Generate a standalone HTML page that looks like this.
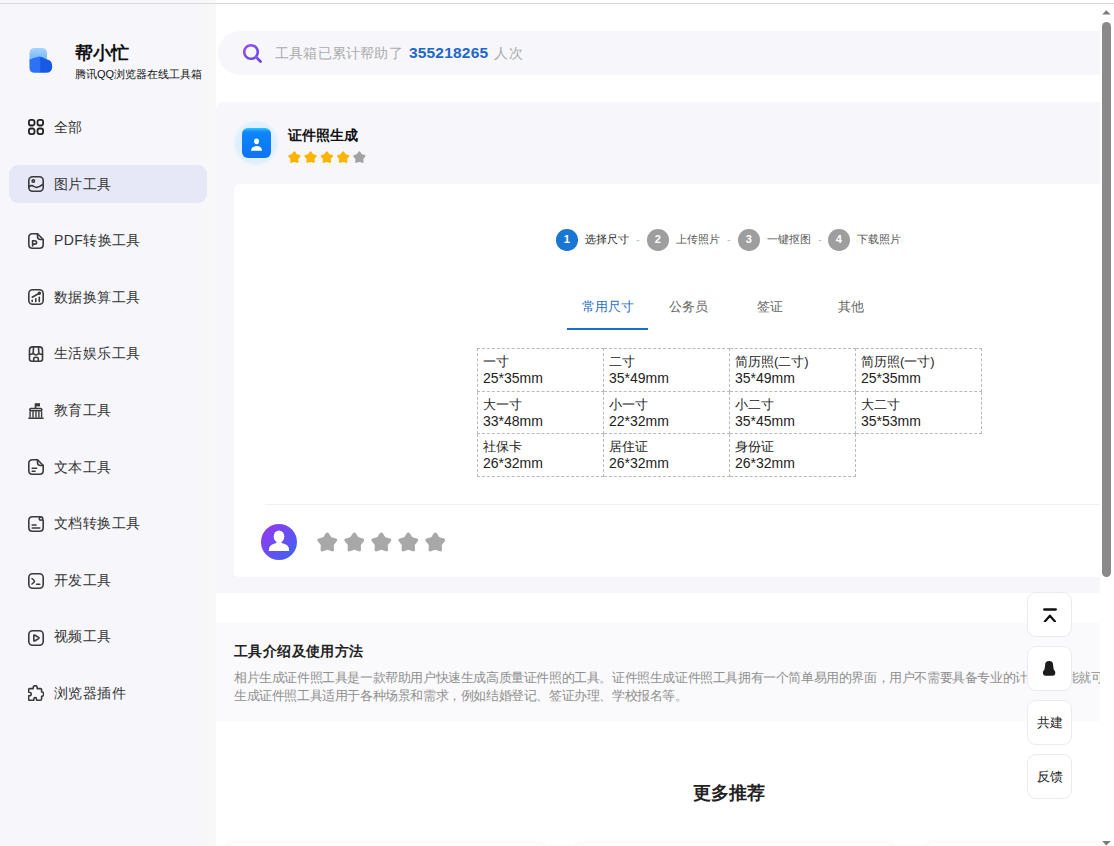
<!DOCTYPE html>
<html><head><meta charset="utf-8">
<style>
*{box-sizing:border-box;margin:0;padding:0}
html,body{width:1114px;height:846px;overflow:hidden;background:#fff;font-family:"Liberation Sans",sans-serif;color:#222}
.abs{position:absolute}
#topline{position:absolute;left:0;top:3px;width:1114px;height:1px;background:#d9d9d9}
#side{position:absolute;left:0;top:0;width:216px;height:846px;background:linear-gradient(90deg,#f7f7fb 0,#f7f7fb 200px,#f8f8f8 216px)}
.brand{position:absolute;left:75px;top:42px;font-size:18px;font-weight:bold;color:#111;line-height:22px}
.sub{position:absolute;left:75px;top:68px;font-size:11px;color:#111;line-height:13px}
.menu{position:absolute;left:9px;width:198px;height:38px;border-radius:9px}
.menu.active{background:#e6e7f7}
.menu svg{position:absolute;left:19px;top:11px;width:16px;height:16px}
.menu .tx{position:absolute;left:45px;top:0;line-height:38px;font-size:14px;letter-spacing:0.4px;color:#333}
#clip{position:absolute;left:216px;top:4px;width:884px;height:842px;overflow:hidden;background:#fff}
#search{position:absolute;left:2px;top:27px;width:1000px;height:44px;border-radius:22px;background:#f7f7fb}
#search .t{position:absolute;left:57px;top:0;line-height:44px;font-size:14px;letter-spacing:0.2px;color:#aaa}
#search .t b{color:#2166cc;font-size:15.5px;margin:0 2px}
#panel{position:absolute;left:0;top:98px;width:1000px;height:491px;background:#f7f7fb;border-radius:8px 0 0 0}
#card{position:absolute;left:18px;top:82px;width:1000px;height:393px;background:#fff;border-radius:5px}
.n{position:absolute;top:45px;width:21.5px;height:21.5px;border-radius:50%;background:#9e9e9e;color:#fff;font-weight:bold;text-align:center;line-height:21.5px;font-size:11px}
.n.on{background:#1976d2}
.sl{position:absolute;top:45px;line-height:21px;font-size:11px;color:#555;white-space:nowrap}
.sl.on{color:#222}
.sd{position:absolute;top:45px;line-height:21px;font-size:11px;color:#bbb}
.tab{position:absolute;top:108px;width:81px;height:30px;line-height:30px;text-align:center;font-size:13px;color:#666}
.tab.on{color:#1f6fc2}
#tabline{position:absolute;left:333px;top:144px;width:81px;height:2px;background:#1a6fc4}
table{position:absolute;left:243px;top:164px;border-collapse:collapse}
td{width:126px;height:42.6px;border:1px dashed #bababa;font-size:13px;line-height:16px;padding:5px 5px 0;vertical-align:top;color:#222}
td i{font-style:normal;display:block;font-size:14px;line-height:16px}
td.e{border:none}
#sep{position:absolute;left:31px;top:320px;width:1000px;height:1px;background:#f0f0f0}
#intro{position:absolute;left:0;top:619px;width:1000px;height:98px;background:#fafafc}
#intro h3{position:absolute;left:18px;top:19px;font-size:14px;letter-spacing:0.4px;font-weight:bold;color:#222;line-height:18px}
#intro p{position:absolute;left:18px;top:46px;width:1200px;font-size:13px;letter-spacing:-0.4px;color:#8f8f8f;line-height:17.8px;white-space:nowrap}
.bc{position:absolute;top:839px;width:322px;height:40px;border-radius:10px;background:#fff;box-shadow:0 0 6px rgba(0,0,0,0.06)}
#more{position:absolute;left:369px;top:778px;width:288px;text-align:center;font-size:18px;font-weight:bold;color:#222;line-height:22px}
.fbtn{position:absolute;left:1027px;width:45px;height:45px;border-radius:9px;background:#fff;border:1px solid #ebebef;font-size:13px;color:#222;text-align:center;line-height:43px}
#sb{position:absolute;left:1100px;top:4px;width:14px;height:842px;background:#fff}
#thumb{position:absolute;left:2px;top:18px;width:9px;height:555px;border-radius:4.5px;background:#8a8a8a}
</style></head><body>
<div id="side">
  <svg class="abs" style="left:27px;top:47px" width="28" height="32" viewBox="27 47 28 32">
    <defs><linearGradient id="lg1" x1="0" y1="0" x2="0" y2="1"><stop offset="0" stop-color="#a5d3fb"/><stop offset="1" stop-color="#72b3f7"/></linearGradient></defs>
    <path d="M29.5 53.2 Q29.5 48 34.7 48 H41.8 Q47 48 47 53.2 V61 H29.5 Z" fill="url(#lg1)"/>
    <path d="M39.5 56.6 Q43.2 57.4 46.3 59.3 Q52.3 60.2 52.3 66.2 Q52.3 72.8 46 72.8 H39.5 Z" fill="#1859e4"/>
    <path d="M29.5 59.8 Q34 57.6 39.5 56.6 L40.2 56.8 V72.8 H34.6 Q29.5 72.8 29.5 67.7 Z" fill="#2c72f6"/>
  </svg>
  <div class="brand">帮小忙</div>
  <div class="sub">腾讯QQ浏览器在线工具箱</div>

  <div class="menu" style="top:108px"><svg viewBox="0 0 16 16" fill="none" stroke="#3a3a3a" stroke-width="1.6" stroke-linecap="round" stroke-linejoin="round"><g stroke="#222" stroke-width="1.8"><rect x="0.9" y="0.9" width="5.6" height="5.6" rx="2"/><rect x="9.5" y="0.9" width="5.6" height="5.6" rx="2"/><rect x="0.9" y="9.5" width="5.6" height="5.6" rx="2"/><rect x="9.5" y="9.5" width="5.6" height="5.6" rx="2"/></g></svg><div class="tx">全部</div></div>
  <div class="menu active" style="top:165px"><svg viewBox="0 0 16 16" fill="none" stroke="#3a3a3a" stroke-width="1.6" stroke-linecap="round" stroke-linejoin="round"><rect x="0.8" y="0.8" width="14.4" height="14.4" rx="3.8"/><circle cx="5.3" cy="5" r="1.2"/><path d="M0.8 10.8 Q3.5 8.5 6 10.5 Q9 13 15.2 8.2"/></svg><div class="tx">图片工具</div></div>
  <div class="menu" style="top:221px"><svg style="top:12px" viewBox="0 0 16 16" fill="none" stroke="#3a3a3a" stroke-width="1.6" stroke-linecap="round" stroke-linejoin="round"><path d="M4.5 0.8 H9.5 L15.2 6.5 V11.5 Q15.2 15.2 11.5 15.2 H4.5 Q0.8 15.2 0.8 11.5 V4.5 Q0.8 0.8 4.5 0.8 Z"/><path d="M9.5 0.8 V3.5 Q9.5 6.5 12.5 6.5 H15.2"/><path d="M4.6 13 V7.7 H6.7 Q8.6 7.7 8.6 9.4 Q8.6 11.1 6.7 11.1 H4.6"/></svg><div class="tx">PDF转换工具</div></div>
  <div class="menu" style="top:278px"><svg viewBox="0 0 16 16" fill="none" stroke="#3a3a3a" stroke-width="1.6" stroke-linecap="round" stroke-linejoin="round"><rect x="0.8" y="0.8" width="14.4" height="14.4" rx="3.8"/><path d="M4.2 12.5 V11.2 M7.8 12.5 V9.8 M11.3 12.5 V8.3 M4.2 8.2 L11.2 4.2"/><circle cx="11.4" cy="4.2" r="0.9" fill="#3a3a3a"/></svg><div class="tx">数据换算工具</div></div>
  <div class="menu" style="top:334px"><svg style="top:12px" viewBox="0 0 16 16" fill="none" stroke="#3a3a3a" stroke-width="1.6" stroke-linecap="round" stroke-linejoin="round"><path d="M1.5 4 Q1.5 0.9 4.5 0.9 H11.5 Q14.5 0.9 14.5 4 V13 Q14.5 15.2 12.3 15.2 H3.7 Q1.5 15.2 1.5 13 Z"/><path d="M1.5 8 Q3.8 8.8 5.2 7.3 Q6.5 9 8 9 Q9.5 9 10.8 7.3 Q12.2 8.8 14.5 8"/><path d="M5.2 7.3 L5.5 0.9 M10.8 7.3 L10.5 0.9"/><path d="M5.7 15.2 V12.8 Q5.7 11.3 8 11.3 Q10.3 11.3 10.3 12.8 V15.2"/></svg><div class="tx">生活娱乐工具</div></div>
  <div class="menu" style="top:391px"><svg style="top:12px" viewBox="0 0 16 16" fill="none" stroke="#3a3a3a" stroke-width="1.6" stroke-linecap="butt" stroke-linejoin="round"><path d="M7.3 0.2 H12 V3.4 H7.3 Z" fill="#3a3a3a" stroke="none"/><path d="M7.5 0.5 V5"/><rect x="1.9" y="5.5" width="11.8" height="2.2" rx="0.8"/><path d="M2.1 8.2 V14.6 M5 8.2 V14.6 M8 8.2 V14.6 M10.9 8.2 V14.6 M13.6 8.2 V14.6" stroke-width="1.4"/><path d="M0.3 15.3 H15.6" stroke-width="1.7"/></svg><div class="tx">教育工具</div></div>
  <div class="menu" style="top:448px"><svg viewBox="0 0 16 16" fill="none" stroke="#3a3a3a" stroke-width="1.6" stroke-linecap="round" stroke-linejoin="round"><path d="M4.5 0.8 H9.5 L15.2 6.5 V11.5 Q15.2 15.2 11.5 15.2 H4.5 Q0.8 15.2 0.8 11.5 V4.5 Q0.8 0.8 4.5 0.8 Z"/><path d="M9.5 0.8 V3.5 Q9.5 6.5 12.5 6.5 H15.2"/><path d="M4.2 9.2 H8.6 M4.2 12.2 H7"/></svg><div class="tx">文本工具</div></div>
  <div class="menu" style="top:504px"><svg style="top:12px" viewBox="0 0 16 16" fill="none" stroke="#3a3a3a" stroke-width="1.6" stroke-linecap="round" stroke-linejoin="round"><path d="M11.5 0.8 H4.5 Q0.8 0.8 0.8 4.5 V11.5 Q0.8 15.2 4.5 15.2 H11.5 Q15.2 15.2 15.2 11.5 V4"/><circle cx="13" cy="2.6" r="1.7"/><path d="M4.2 9 H8 M4.2 12 H11.8"/></svg><div class="tx">文档转换工具</div></div>
  <div class="menu" style="top:561px"><svg style="top:12px" viewBox="0 0 16 16" fill="none" stroke="#3a3a3a" stroke-width="1.6" stroke-linecap="round" stroke-linejoin="round"><rect x="0.8" y="0.8" width="14.4" height="14.4" rx="3.8"/><path d="M4 5.5 Q6.5 7.5 6.5 8.2 Q6.5 9 4 11"/><path d="M8.6 11.3 H11.8"/></svg><div class="tx">开发工具</div></div>
  <div class="menu" style="top:617px"><svg style="top:13px" viewBox="0 0 16 16" fill="none" stroke="#3a3a3a" stroke-width="1.6" stroke-linecap="round" stroke-linejoin="round"><rect x="0.8" y="0.8" width="14.4" height="14.4" rx="3.8"/><path d="M5.8 5.8 Q5.8 4.6 7 5.2 L10.6 7.4 Q11.4 8 10.6 8.6 L7 10.8 Q5.8 11.4 5.8 10.2 Z"/></svg><div class="tx">视频工具</div></div>
  <div class="menu" style="top:674px"><svg viewBox="0 0 16 16" fill="none" stroke="#3a3a3a" stroke-width="1.6" stroke-linecap="round" stroke-linejoin="round"><path d="M5.2 2.8 Q5.2 0.6 7.2 0.6 Q9.2 0.6 9.2 2.8 V3.6 H12.4 Q13.6 3.6 13.6 4.8 V7 H14 Q15.6 7 15.6 9.2 Q15.6 11.3 14 11.3 H13.6 V13.9 Q13.6 15.2 12.4 15.2 H8.6 V14.2 Q8.6 12.6 7.2 12.6 Q5.8 12.6 5.8 14.2 V15.2 H1.4 Q0.6 15.2 0.6 14 V10.8 H1.2 Q3.2 10.8 3.2 9 Q3.2 7.2 1.2 7.2 H0.6 V4.8 Q0.6 3.6 1.8 3.6 H5.2 Z"/></svg><div class="tx">浏览器插件</div></div>
</div>

<div id="topline"></div>
<div id="clip">
  <div id="search">
    <svg class="abs" style="left:24px;top:12px" width="21" height="21" viewBox="0 0 21 21">
      <defs><linearGradient id="sg" x1="0" y1="0" x2="1" y2="1"><stop offset="0" stop-color="#9a4cf0"/><stop offset="1" stop-color="#5b4be6"/></linearGradient></defs>
      <circle cx="9" cy="9" r="6.8" fill="none" stroke="url(#sg)" stroke-width="2.6"/>
      <path d="M14 14 L18.5 18.5" stroke="url(#sg)" stroke-width="2.8" stroke-linecap="round"/>
    </svg>
    <div class="t">工具箱已累计帮助了 <b>355218265</b> 人次</div>
  </div>

  <div id="panel">
    <div class="abs" style="left:14px;top:15px;width:52px;height:52px;background:radial-gradient(circle 26px at center,#dcedfc 0,#def0fc 19px,#e6f2fb 21px,rgba(240,245,252,0) 23.5px)"></div>
    <div class="abs" style="left:26px;top:26px;width:29px;height:30px;border-radius:6px;background:linear-gradient(#2fc4ff 0,#0f86fb 4px,#0c7cf6 60%,#1272ef 100%)"></div>
    <svg class="abs" style="left:34px;top:36px" width="13" height="14" viewBox="0 0 13 14"><ellipse cx="6.5" cy="3.3" rx="2.5" ry="2.9" fill="#fff"/><path d="M1 12.8 Q1 8.3 6.5 8.1 Q12 8.3 12 12.8 Z" fill="#fff"/></svg>
    <div class="abs" style="left:72px;top:24px;font-size:14px;font-weight:bold;color:#111;line-height:18px">证件照生成</div>
    <svg class="abs" style="left:72px;top:49px" width="82" height="14" viewBox="0 0 82 14"><path transform="translate(0.0 0)" d="M6.35 1.30 L8.14 4.13 L11.39 4.96 L9.25 7.54 L9.47 10.89 L6.35 9.65 L3.23 10.89 L3.45 7.54 L1.31 4.96 L4.56 4.13 Z" fill="#fbb500" stroke="#fbb500" stroke-width="2.1" stroke-linejoin="round"/><path transform="translate(16.2 0)" d="M6.35 1.30 L8.14 4.13 L11.39 4.96 L9.25 7.54 L9.47 10.89 L6.35 9.65 L3.23 10.89 L3.45 7.54 L1.31 4.96 L4.56 4.13 Z" fill="#fbb500" stroke="#fbb500" stroke-width="2.1" stroke-linejoin="round"/><path transform="translate(32.5 0)" d="M6.35 1.30 L8.14 4.13 L11.39 4.96 L9.25 7.54 L9.47 10.89 L6.35 9.65 L3.23 10.89 L3.45 7.54 L1.31 4.96 L4.56 4.13 Z" fill="#fbb500" stroke="#fbb500" stroke-width="2.1" stroke-linejoin="round"/><path transform="translate(48.8 0)" d="M6.35 1.30 L8.14 4.13 L11.39 4.96 L9.25 7.54 L9.47 10.89 L6.35 9.65 L3.23 10.89 L3.45 7.54 L1.31 4.96 L4.56 4.13 Z" fill="#fbb500" stroke="#fbb500" stroke-width="2.1" stroke-linejoin="round"/><path transform="translate(65.0 0)" d="M6.35 1.30 L8.14 4.13 L11.39 4.96 L9.25 7.54 L9.47 10.89 L6.35 9.65 L3.23 10.89 L3.45 7.54 L1.31 4.96 L4.56 4.13 Z" fill="#a3a3a3" stroke="#a3a3a3" stroke-width="2.1" stroke-linejoin="round"/></svg>

    <div id="card">
      <div class="n on" style="left:322px">1</div><div class="sl on" style="left:351px">选择尺寸</div><div class="sd" style="left:402px">-</div>
      <div class="n" style="left:413px">2</div><div class="sl" style="left:442px">上传照片</div><div class="sd" style="left:493px">-</div>
      <div class="n" style="left:504px">3</div><div class="sl" style="left:533px">一键抠图</div><div class="sd" style="left:584px">-</div>
      <div class="n" style="left:594px">4</div><div class="sl" style="left:623px">下载照片</div>

      <div class="tab on" style="left:333px">常用尺寸</div><div id="tabline"></div>
      <div class="tab" style="left:414px">公务员</div>
      <div class="tab" style="left:495px">签证</div>
      <div class="tab" style="left:576px">其他</div>

      <table>
        <tr><td>一寸<i>25*35mm</i></td><td>二寸<i>35*49mm</i></td><td>简历照(二寸)<i>35*49mm</i></td><td>简历照(一寸)<i>25*35mm</i></td></tr>
        <tr><td>大一寸<i>33*48mm</i></td><td>小一寸<i>22*32mm</i></td><td>小二寸<i>35*45mm</i></td><td>大二寸<i>35*53mm</i></td></tr>
        <tr><td>社保卡<i>26*32mm</i></td><td>居住证<i>26*32mm</i></td><td>身份证<i>26*32mm</i></td><td class="e"></td></tr>
      </table>
      <div id="sep"></div>
      <svg class="abs" style="left:27px;top:340px" width="36" height="36" viewBox="0 0 36 36">
        <defs><linearGradient id="ag" x1="0" y1="0" x2="1" y2="1"><stop offset="0" stop-color="#9d36f0"/><stop offset="1" stop-color="#3566f3"/></linearGradient></defs>
        <circle cx="18" cy="18" r="18" fill="url(#ag)"/>
        <ellipse cx="18" cy="12.6" rx="5.3" ry="6.1" fill="#fff"/>
        <path d="M7.8 26.9 Q7.6 21 13 19.8 Q15 19.4 16 18 H20 Q21 19.4 23 19.8 Q28.4 21 28.2 26.9 Z" fill="#fff"/>
      </svg>
      <svg class="abs" style="left:83px;top:348px" width="135" height="23" viewBox="0 0 135 23"><path transform="translate(0.0 0)" d="M10.30 2.20 L13.24 6.75 L18.48 8.14 L15.06 12.35 L15.35 17.76 L10.30 15.80 L5.25 17.76 L5.54 12.35 L2.12 8.14 L7.36 6.75 Z" fill="#a8a8a8" stroke="#a8a8a8" stroke-width="3.4" stroke-linejoin="round"/><path transform="translate(27.0 0)" d="M10.30 2.20 L13.24 6.75 L18.48 8.14 L15.06 12.35 L15.35 17.76 L10.30 15.80 L5.25 17.76 L5.54 12.35 L2.12 8.14 L7.36 6.75 Z" fill="#a8a8a8" stroke="#a8a8a8" stroke-width="3.4" stroke-linejoin="round"/><path transform="translate(54.0 0)" d="M10.30 2.20 L13.24 6.75 L18.48 8.14 L15.06 12.35 L15.35 17.76 L10.30 15.80 L5.25 17.76 L5.54 12.35 L2.12 8.14 L7.36 6.75 Z" fill="#a8a8a8" stroke="#a8a8a8" stroke-width="3.4" stroke-linejoin="round"/><path transform="translate(81.0 0)" d="M10.30 2.20 L13.24 6.75 L18.48 8.14 L15.06 12.35 L15.35 17.76 L10.30 15.80 L5.25 17.76 L5.54 12.35 L2.12 8.14 L7.36 6.75 Z" fill="#a8a8a8" stroke="#a8a8a8" stroke-width="3.4" stroke-linejoin="round"/><path transform="translate(108.0 0)" d="M10.30 2.20 L13.24 6.75 L18.48 8.14 L15.06 12.35 L15.35 17.76 L10.30 15.80 L5.25 17.76 L5.54 12.35 L2.12 8.14 L7.36 6.75 Z" fill="#a8a8a8" stroke="#a8a8a8" stroke-width="3.4" stroke-linejoin="round"/></svg>
    </div>
  </div>

  <div id="intro">
    <h3>工具介绍及使用方法</h3>
    <p>相片生成证件照工具是一款帮助用户快速生成高质量证件照的工具。证件照生成证件照工具拥有一个简单易用的界面，用户不需要具备专业的计算机技能就可以<br>生成证件照工具适用于各种场景和需求，例如结婚登记、签证办理、学校报名等。</p>
  </div>

  <div id="more">更多推荐</div>
  <div class="bc" style="left:8px"></div><div class="bc" style="left:358px"></div><div class="bc" style="left:708px"></div>
</div>

<div class="fbtn" style="top:592px"><svg class="abs" style="left:15px;top:15px" width="14" height="14" viewBox="0 0 14 14" fill="none" stroke="#111" stroke-width="2.3" stroke-linecap="round" stroke-linejoin="round"><path d="M1.2 1.5 H12.8 M1.9 13.4 L6.9 7.7 L11.9 13.4"/></svg></div>
<div class="fbtn" style="top:646px"><svg class="abs" style="left:15px;top:14px" width="13" height="16" viewBox="0 0 13 16"><path d="M2.1 4.3 Q2.1 0.1 6.1 0.1 Q10.1 0.1 10.1 4.3 L10.7 8.6 Q12.3 10 12.3 11.8 Q12.3 14.8 9.6 14.8 H2.6 Q-0.1 14.8 -0.1 11.8 Q-0.1 10 1.5 8.6 Z" fill="#1c1c1c"/></svg></div>
<div class="fbtn" style="top:700px">共建</div>
<div class="fbtn" style="top:754px">反馈</div>

<div id="sb"><svg class="abs" style="left:0;top:0" width="14" height="842" viewBox="0 0 14 842"><path d="M2.2 10.5 L6.3 6.3 L10.8 10.5 Z" fill="#7b7b7b"/><path d="M2.2 837 L6.3 841.5 L10.8 837 Z" fill="#7b7b7b"/></svg><div id="thumb"></div></div>
</body></html>
